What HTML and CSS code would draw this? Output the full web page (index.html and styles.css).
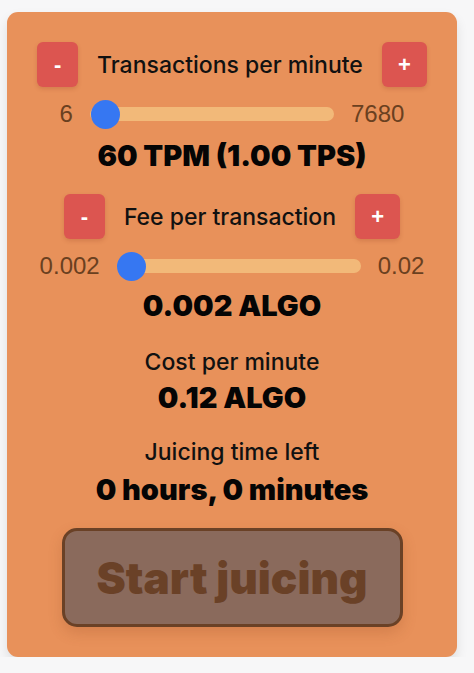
FILE: index.html
```html
<!DOCTYPE html>
<html>
<head>
<meta charset="utf-8">
<link rel="stylesheet" href="styles.css">
</head>
<body>
<div class="card">
  <div class="control">
    <div class="head">
      <button class="step minus">-</button>
      <span class="title">Transactions per minute</span>
      <button class="step plus">+</button>
    </div>
    <div class="slider-row">
      <span class="lim">6</span>
      <input class="range" type="range" min="6" max="7680" value="60">
      <span class="lim">7680</span>
    </div>
    <div class="value">60 TPM (1.00 TPS)</div>
  </div>
  <div class="control second">
    <div class="head">
      <button class="step minus">-</button>
      <span class="title">Fee per transaction</span>
      <button class="step plus">+</button>
    </div>
    <div class="slider-row">
      <span class="lim">0.002</span>
      <input class="range" type="range" min="0.002" max="0.02" step="0.001" value="0.002">
      <span class="lim">0.02</span>
    </div>
    <div class="value">0.002 ALGO</div>
  </div>
  <div class="stat first-stat">
    <div class="label">Cost per minute</div>
    <div class="value">0.12 ALGO</div>
  </div>
  <div class="stat second-stat">
    <div class="label">Juicing time left</div>
    <div class="value">0 hours, 0 minutes</div>
  </div>
  <button class="start">Start juicing</button>
</div>
</body>
</html>
```
FILE: styles.css
```css
html, body {
  margin: 0;
  padding: 0;
  background: #f7f7f8;
}
body {
  padding: 12px 0 0 7px;
  font-family: "Inter", "Noto Sans", sans-serif;
}
.card {
  box-sizing: border-box;
  width: 450px;
  height: 645px;
  background: #e8915a;
  border-radius: 11px;
  box-shadow: 0 6px 12px rgba(0,0,0,0.10);
  display: flex;
  flex-direction: column;
  align-items: center;
  padding-top: 30px;
}
.control {
  display: flex;
  flex-direction: column;
  align-items: center;
}
.second {
  margin-top: 21px;
}
.head {
  display: flex;
  align-items: center;
  gap: 19px;
  height: 45px;
}
.step {
  height: 45px;
  border: none;
  border-radius: 6px;
  background: #dc5550;
  color: #fff;
  font-family: "Liberation Sans", sans-serif;
  font-weight: bold;
  font-size: 22px;
  box-shadow: 0 2px 4px rgba(120,40,20,0.18);
  padding: 0;
  display: flex;
  align-items: center;
  justify-content: center;
}
.step.minus { width: 41px; }
.step.plus { width: 45px; }
.title {
  font-size: 23px;
  font-weight: 500;
  color: #111;
  line-height: 28px;
}
.slider-row {
  display: flex;
  align-items: center;
  gap: 17px;
  margin-top: 12px;
  height: 30px;
}
.lim {
  font-family: "Liberation Sans", sans-serif;
  font-size: 24px;
  color: #6a4020;
}
.range {
  -webkit-appearance: none;
  appearance: none;
  width: 244px;
  height: 14px;
  margin: 0;
  border-radius: 7px;
  background: #f2b979;
  outline: none;
}
.range::-webkit-slider-thumb {
  -webkit-appearance: none;
  appearance: none;
  width: 29px;
  height: 29px;
  border-radius: 50%;
  background: #3677f2;
  border: none;
}
.value {
  font-size: 29px;
  font-weight: 900;
  color: #050505;
  line-height: 34px;
  margin-top: 10px;
}
.second .value {
  margin-top: 8px;
}
.stat {
  display: flex;
  flex-direction: column;
  align-items: center;
}
.first-stat {
  margin-top: 26px;
}
.second-stat {
  margin-top: 24px;
}
.label {
  font-size: 23px;
  font-weight: 500;
  color: #111;
  line-height: 26px;
}
.first-stat .value {
  margin-top: 6px;
}
.second-stat .value {
  margin-top: 8px;
}
.start {
  margin-top: 21px;
  width: 341px;
  height: 99px;
  border: 3px solid #6a4126;
  border-radius: 15px;
  background: #8a6a5c;
  color: #6a4127;
  font-family: "Inter", sans-serif;
  font-weight: 900;
  font-size: 44px;
  box-shadow: 0 6px 14px rgba(140,70,30,0.22);
  padding: 0;
}
```
